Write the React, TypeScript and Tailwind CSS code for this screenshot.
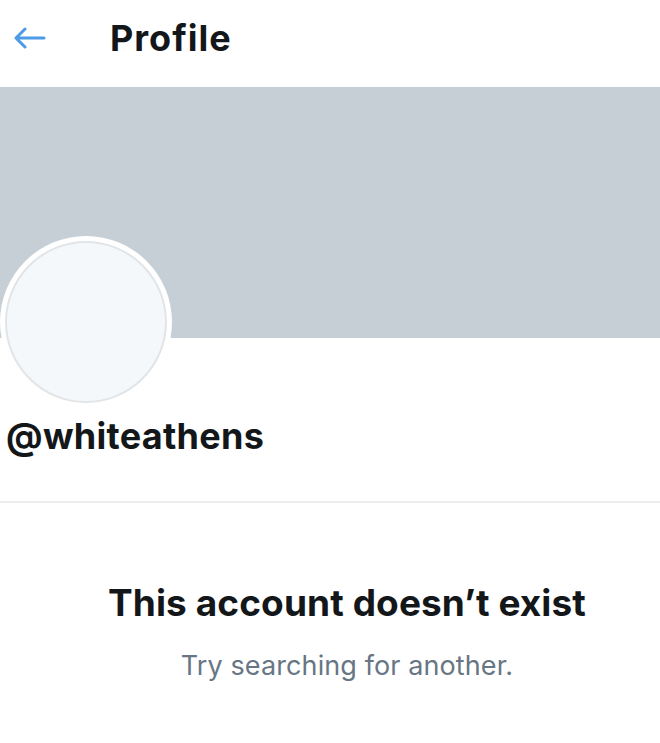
import React from 'react';

const App: React.FC = () => {
  return (
    <div className="min-h-screen w-[660px] bg-white font-['Inter','Liberation_Sans',sans-serif] text-[#14171a]">
      {/* header */}
      <div className="flex h-[87px] items-center pb-[12px]">
        <div className="flex w-[110px] pl-[13px]">
          <svg width="33" height="22" viewBox="0 0 33 22" fill="none">
            <path
              d="M31 11H3M12 2L3 11L12 20"
              stroke="#4d9be6"
              strokeWidth="3"
              strokeLinecap="round"
              strokeLinejoin="round"
            />
          </svg>
        </div>
        <h1 className="text-[36px] font-bold leading-[44px] tracking-[1px]">Profile</h1>
      </div>

      {/* banner */}
      <div className="h-[251px] bg-[#c6cfd6]" />

      {/* avatar */}
      <div className="mt-[-102px] flex h-[172px] w-[172px] items-center justify-center rounded-full bg-white">
        <div className="h-[162px] w-[162px] rounded-full border-2 border-[#e2e5e8] bg-[#f5f8fa]" />
      </div>

      <div className="pl-[6px] pt-[8px] text-[36px] font-bold leading-[40px] tracking-[0.3px]">@whiteathens</div>

      <div className="mt-[45px] h-[2px] bg-[#ececec]" />

      {/* empty state */}
      <div className="flex flex-col items-center pl-[34px] pt-[78px]">
        <h2 className="text-[37px] font-bold leading-[44px] tracking-[0.1px]">This account doesn’t exist</h2>
        <p className="mt-[25px] text-[27px] leading-[32px] tracking-[0.1px] text-[#687684]">Try searching for another.</p>
      </div>
    </div>
  );
};

export default App;
